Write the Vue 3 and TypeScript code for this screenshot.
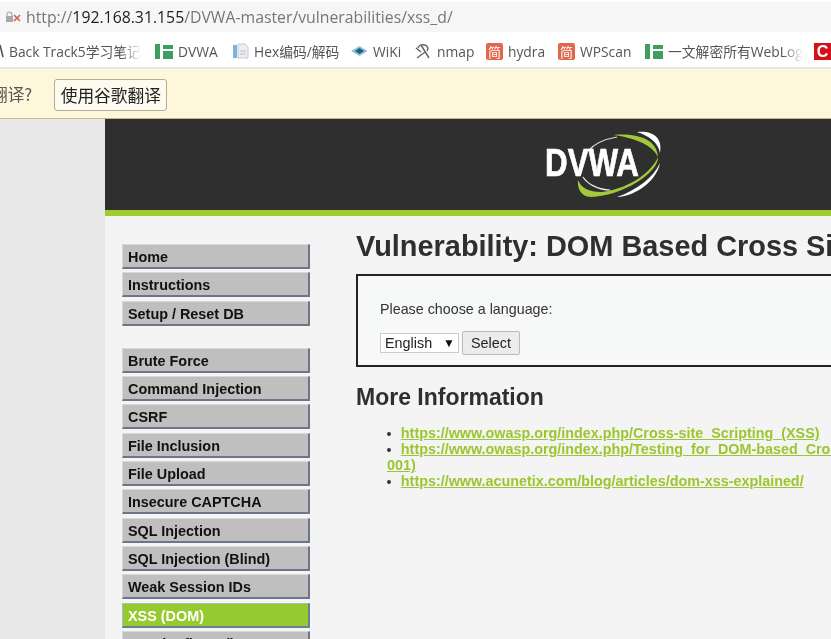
<script setup lang="ts">
interface Bookmark { label: string; icon: string; width: number; faded?: boolean }
const bookmarks: Bookmark[] = [
  { label: 'Back Track5学习笔记', icon: 'person', width: 155, faded: true },
  { label: 'DVWA', icon: 'sheet', width: 77 },
  { label: 'Hex编码/解码', icon: 'doc', width: 119 },
  { label: 'WiKi', icon: 'wiki', width: 64 },
  { label: 'nmap', icon: 'nmap', width: 71 },
  { label: 'hydra', icon: 'jian', width: 72 },
  { label: 'WPScan', icon: 'jian', width: 87 },
  { label: '一文解密所有WebLog', icon: 'sheet', width: 169, faded: true },
  { label: '', icon: 'red', width: 20 }
]
const menuGroups: string[][] = [
  ['Home', 'Instructions', 'Setup / Reset DB'],
  ['Brute Force', 'Command Injection', 'CSRF', 'File Inclusion', 'File Upload', 'Insecure CAPTCHA', 'SQL Injection', 'SQL Injection (Blind)', 'Weak Session IDs', 'XSS (DOM)', 'XSS (Reflected)']
]
const links = [
  'https://www.owasp.org/index.php/Cross-site_Scripting_(XSS)',
  'https://www.owasp.org/index.php/Testing_for_DOM-based_Cross_site_scripting_(OTG-CLIENT-001)',
  'https://www.acunetix.com/blog/articles/dom-xss-explained/'
]
</script>

<template>
  <div class="screen">
    <div class="urlbar">
      <svg class="lock" width="20" height="14" viewBox="0 0 20 14">
        <path d="M4 6V4.500a2.400 2.400 0 0 1 4.800 0V6" fill="none" stroke="#b5b5b5" stroke-width="1.400" />
        <rect x="3" y="6" width="7" height="6" fill="#a8a8a8" />
        <path d="M11 5l6 6M17 5l-6 6" stroke="#e2574c" stroke-width="1.600" />
      </svg>
      <span class="url">http://<b>192.168.31.155</b>/DVWA-master/vulnerabilities/xss_d/</span>
    </div>

    <div class="bookmarks">
      <div v-for="(b, i) in bookmarks" :key="i" class="bookmark" :style="{ width: b.width + 'px' }">
        <svg v-if="b.icon === 'person'" class="personicon" width="4" height="16" viewBox="0 0 4 16">
          <path d="M0 2L-3 14M0 2L3 14" stroke="#555" stroke-width="1.600" fill="none" />
        </svg>
        <svg v-else-if="b.icon === 'sheet'" width="18" height="16" viewBox="0 0 18 16">
          <rect x="0" y="1" width="5" height="15" fill="#3f9f5f" />
          <rect x="8" y="2" width="10" height="4" fill="#3f9f5f" />
          <rect x="8" y="8" width="10" height="8" fill="#3f9f5f" />
        </svg>
        <svg v-else-if="b.icon === 'doc'" width="17" height="16" viewBox="0 0 17 16">
          <rect x="1" y="2" width="4" height="13" fill="#7fb2dc" />
          <path d="M6 1h7l3 3v11H6z" fill="#eceff2" stroke="#c4c9cf" />
          <path d="M8 8h6M8 11h6" stroke="#b8bec6" />
        </svg>
        <svg v-else-if="b.icon === 'wiki'" width="17" height="16" viewBox="0 0 17 16">
          <path d="M0 8l8.500-5 8 5-8 5z" fill="#8fc0d8" />
          <path d="M4 8l4.500-3 4.500 3-4.500 3z" fill="#1f5f80" />
        </svg>
        <svg v-else-if="b.icon === 'nmap'" width="17" height="16" viewBox="0 0 17 16">
          <path d="M3 5a5 4 0 1 1 9 3" fill="none" stroke="#666" stroke-width="1.500" />
          <path d="M6 2l8 13M10 9l-8 6M1 5l5 4" stroke="#666" stroke-width="1.500" fill="none" />
        </svg>
        <div v-else-if="b.icon === 'jian'" class="jian">简</div>
        <div v-else-if="b.icon === 'red'" class="redc">C</div>
        <span v-if="b.label" class="blabel" :class="{ faded: b.faded }">{{ b.label }}</span>
      </div>
    </div>

    <div class="translate">
      <span class="ask">翻译?</span>
      <button class="gbtn">使用谷歌翻译</button>
    </div>

    <div class="page">
      <div class="gutter"></div>
      <div class="container">
        <header class="banner">
          <svg class="logo" width="120" height="70" viewBox="0 0 120 70">
            <path d="M92 2C108 0 118 8 115 23C113 12 104 6 92 2z" fill="#fff" />
            <path d="M68 5C90 3 112 8 113 27C108 16 92 8 68 5z" fill="#a3c93a" />
            <path d="M113 27C114 42 78 66 46 67C36 67 32 58 33 50C36 58 44 62 56 62C80 60 106 44 113 27z" fill="#a3c93a" />
            <path d="M115 33C112 50 92 66 72 67C92 60 108 48 115 33z" fill="#fff" />
            <path d="M72 7C60 9 50 13 43 21" fill="none" stroke="#ddd" stroke-width="1.200" />
            <path d="M38 47C42 54 54 60 65 60" fill="none" stroke="#eee" stroke-width="1.200" />
            <text class="logotext" x="0" y="46" textLength="94" lengthAdjust="spacingAndGlyphs">DVWA</text>
          </svg>
        </header>
        <div class="rule"></div>
        <div class="body">
          <nav class="menu">
            <ul v-for="(group, g) in menuGroups" :key="g" class="group">
              <li v-for="item in group" :key="item" class="item" :class="{ active: item === 'XSS (DOM)' }">{{ item }}</li>
            </ul>
          </nav>
          <main class="main">
            <h1>Vulnerability: DOM Based Cross Site Scripting (XSS)</h1>
            <div class="vbox">
              <p class="prompt">Please choose a language:</p>
              <div class="formrow">
                <div class="select">English<span class="arrow">▼</span></div>
                <button class="selectbtn">Select</button>
              </div>
            </div>
            <h2>More Information</h2>
            <ul class="links">
              <li v-for="l in links" :key="l"><a>{{ l }}</a></li>
            </ul>
          </main>
        </div>
      </div>
    </div>
  </div>
</template>

<style>
html, body { margin: 0; background: #fff; overflow: hidden; }
</style>

<style scoped>
.screen { width: 831px; height: 639px; overflow: hidden; display: flex; flex-direction: column; background: #fff; font-family: "Liberation Sans", Arial, sans-serif; filter: blur(0.3px); }
.urlbar { height: 30px; margin-top: 2px; flex: none; display: flex; align-items: center; background: #f6f6f6; padding-left: 3px; }
.lock { flex: none; margin-right: 3px; }
.url { font: 15.800px "Open Sans", "Noto Sans", sans-serif; color: #777; white-space: nowrap; }
.url b { font-weight: 400; color: #222; }
.bookmarks { height: 37px; flex: none; display: flex; align-items: center; overflow: hidden; border-bottom: 2px solid #e6e6e6; box-sizing: border-box; padding-top: 3px; }
.bookmark { flex: none; display: flex; align-items: center; gap: 5px; overflow: hidden; white-space: nowrap; }
.bookmark svg { flex: none; overflow: visible; }
.blabel { font: 13.800px "Open Sans", "Noto Sans CJK SC", sans-serif; color: #555; }
.faded { -webkit-mask-image: linear-gradient(to right, #000 85%, transparent); mask-image: linear-gradient(to right, #000 85%, transparent); }
.jian { width: 17px; height: 17px; border-radius: 2px; background: #e2674f; color: #fff; font: 13px/17px "Noto Sans CJK SC", sans-serif; text-align: center; flex: none; }
.redc { width: 17px; height: 17px; background: #d4111b; color: #fff; font: 700 16px/17px "Liberation Sans", sans-serif; text-align: center; }
.translate { height: 50px; flex: none; display: flex; align-items: center; background: #fff7dc; border-bottom: 1px solid #c0b69a; box-sizing: border-box; }
.ask { font: 16.700px "Noto Sans CJK SC", sans-serif; color: #555; margin-left: -9px; margin-right: 22px; white-space: nowrap; }
.gbtn { height: 32px; width: 113px; margin-top: 2px; padding: 0; border: 1px solid #b5ad94; border-radius: 3px; background: #fdfaf0; font: 16.700px "Noto Sans CJK SC", sans-serif; color: #222; white-space: nowrap; }
.page { flex: 1; display: flex; min-height: 0; background: #e8e8e8; }
.gutter { width: 105px; flex: none; }
.container { flex: 1; min-width: 0; background: #f4f4f4; display: flex; flex-direction: column; }
.banner { height: 91px; flex: none; background: #2f2f2f; display: flex; align-items: center; padding-left: 440px; box-sizing: border-box; }
.logo { overflow: visible; }
.logotext { font: 700 38px "Liberation Sans", sans-serif; fill: #fff; stroke: #fff; stroke-width: 0.700px; }
.rule { height: 6px; flex: none; background: #9fcb2f; }
.body { flex: 1; display: flex; min-height: 0; padding: 28px 0 0 17px; }
.menu { width: 188px; flex: none; margin-right: 46px; }
.group { list-style: none; margin: 0 0 22px; padding: 0; }
.item { height: 25px; margin-bottom: 3.330px; box-sizing: border-box; background: #bfbfbf; border: 1px solid; border-color: #d8d8d8 #6d7689 #6d7689 #d8d8d8; border-width: 1px 2px 2px 1px; padding-left: 5px; font: 700 14.400px/24px "Liberation Sans", sans-serif; color: #111; white-space: nowrap; overflow: hidden; }
.item.active { background: #96cb2f; color: #fff; border-color: #a9b9c8 #6d7f95 #6d7f95 #a9b9c8; }
.main { flex: 1; min-width: 0; }
h1 { margin: -15px 0 0; font: 700 28.900px/34px "Liberation Sans", sans-serif; color: #2f2f2f; white-space: nowrap; }
.vbox { margin-top: 11px; width: 600px; height: 93px; box-sizing: border-box; border: 2px solid #222; background: #f7f8f8; padding: 0 0 0 22px; }
.prompt { margin: 24px 0 0; font: 14.300px/18px "Liberation Sans", sans-serif; color: #333; }
.formrow { display: flex; align-items: center; margin-top: 13px; gap: 3px; }
.select { width: 79px; height: 20px; box-sizing: border-box; border: 1px solid #ccc; background: #fff; padding-left: 4px; font: 14.400px/18px "Liberation Sans", sans-serif; color: #222; position: relative; }
.arrow { position: absolute; right: 3px; top: 0; font-size: 12px; color: #111; }
.selectbtn { width: 58px; height: 24px; padding: 0; border: 1px solid #bbb; border-radius: 2px; background: #ececec; font: 14.400px "Liberation Sans", sans-serif; color: #222; }
h2 { margin: 17px 0 0; font: 700 23px/26px "Liberation Sans", sans-serif; color: #2f2f2f; white-space: nowrap; }
.links { margin: 15px 0 0; padding: 0 0 0 31px; width: 669px; list-style-position: inside; font: 700 14.350px/16px "Liberation Sans", sans-serif; color: #333; }
.links a { color: #9bc62f; text-decoration: underline; margin-left: -5.500px; }
</style>
